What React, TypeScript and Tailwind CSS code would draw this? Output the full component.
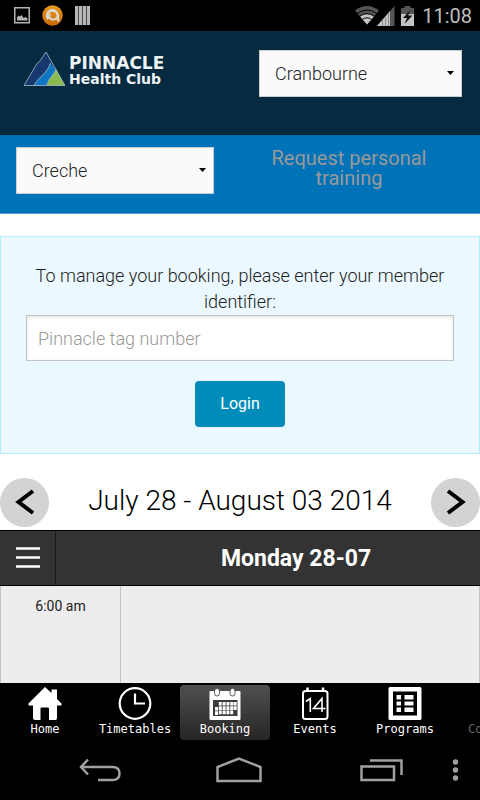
import type { ReactNode } from "react";

function StatusBar() {
  return (
    <div className="flex h-[31px] items-center bg-black pl-[14px] pr-2">
      <div className="flex flex-1 items-center gap-3">
        <svg width="16" height="17" viewBox="0 0 16 17" aria-hidden="true">
          <rect x="0.75" y="0.75" width="14.5" height="15" fill="none" stroke="#b4b4b4" strokeWidth="1.5" />
          <path d="M3 13.5V10.5L4.5 8.5L6 9.5L7.5 8L9.5 11L11.5 10L13.5 11.5V13.5Z" fill="#b4b4b4" />
        </svg>
        <svg width="21" height="21" viewBox="0 0 21 21" aria-hidden="true">
          <defs>
            <linearGradient id="coin" x1="0" y1="0" x2="0" y2="1">
              <stop offset="0" stopColor="#e79a1c" />
              <stop offset="1" stopColor="#c96a08" />
            </linearGradient>
          </defs>
          <circle cx="10.5" cy="10.5" r="10.2" fill="url(#coin)" />
          <path d="M6.2 14.2A5.4 5.4 0 1 1 15.8 10.4V13.8Q15.8 15.4 17.4 15.2" fill="none" stroke="#dcd8d2" strokeWidth="2.6" />
          <path d="M15 12.5A4.4 4.4 0 0 1 8 13.2A3 3 0 0 1 8.5 9" fill="none" stroke="#dcd8d2" strokeWidth="2" />
        </svg>
        <svg width="15" height="19" viewBox="0 0 15 19" aria-hidden="true">
          <path d="M0 0H15V19H0Z" fill="#b8b8b8" />
          <path d="M3 0H4V19H3ZM7 0H8V19H7ZM11 0H12V19H11Z" fill="#4a4a4a" />
        </svg>
      </div>
      <svg width="24" height="19" viewBox="0 0 24 19" aria-hidden="true">
        <path d="M12 18.5L0 4.6Q5.5 0 12 0T24 4.6Z" fill="#555" />
        <path d="M12 18.5L5 10.6Q8 8.2 12 8.2T19 10.6Z" fill="#c4c4c4" />
        <path d="M2.5 7.5Q7 4 12 4T21.5 7.5M4.7 10.3Q8 7.6 12 7.6T19.3 10.3M7.5 13.3Q9.6 11.8 12 11.8T16.5 13.3" fill="none" stroke="#000" strokeWidth="1" />
      </svg>
      <svg className="-ml-[2px]" width="18" height="20" viewBox="0 0 18 20" aria-hidden="true">
        <path d="M17.5 0V20H0Z" fill="#555" />
        <path d="M13 5V20H0Z" fill="#c4c4c4" />
        <path d="M5.5 14V20M8.500 10.500V20M11.500 7V20" stroke="#8c8c8c" strokeWidth="1" />
      </svg>
      <svg className="ml-[6px]" width="13" height="20" viewBox="0 0 13 20" aria-hidden="true">
        <path d="M3.5 0H9.5V2H13V8H0V2H3.5Z" fill="#555" />
        <path d="M0 8H13V20H0Z" fill="#c4c4c4" />
        <path d="M9.5 4L2 12H6L3.5 18L11.5 9.5H7.2Z" fill="#111" />
      </svg>
      <time className="ml-2 text-[20px] leading-6 text-[#bdbdbd]">11:08</time>
    </div>
  );
}

function Logo() {
  return (
    <div className="flex items-start gap-1 pt-[2px]">
      <svg width="41" height="34" viewBox="0 0 41 34" aria-hidden="true">
        <path d="M0 33.5L13 11.5L15.5 9.5L22 0L41 33.5Z" fill="#16386f" />
        <path d="M10 33.5C15 24 23 22 26.5 11L32 18C29 25 25 26 22.5 33.5Z" fill="#0e76c2" />
        <path d="M23 33.5C25 26 29 24 32 17.5L41 33.5Z" fill="#8abb4c" />
        <path d="M10 33.5C15 24 23 22 26.5 11M22.5 33.5C25 26 29 24 32 17.5M0 33.5L13 11.5L15.5 9.5L22 0L41 33.5Z" fill="none" stroke="#a8bccb" strokeWidth="0.8" />
      </svg>
      <div className="flex flex-col pt-[2px] font-['DejaVu_Sans',sans-serif] font-bold text-[#eef3f6]">
        <span className="text-[17px] leading-[18px]">PINNACLE</span>
        <span className="text-[14px] leading-[14px]">Health Club</span>
      </div>
    </div>
  );
}

function Picker({ label, options, className }: { label: string; options: string[]; className: string }) {
  return (
    <div className={`relative ${className}`}>
      <select
        aria-label={label}
        className="h-[47px] w-full appearance-none border border-[#ccc] bg-[#fafafa] pl-[15px] pr-8 text-[18px] font-light text-[#222]"
      >
        {options.map((o) => (
          <option key={o}>{o}</option>
        ))}
      </select>
      <svg className="pointer-events-none absolute right-2 top-[21px]" width="7" height="4" viewBox="0 0 7 4" aria-hidden="true">
        <path d="M0 0H7L3.5 4Z" fill="#000" />
      </svg>
    </div>
  );
}

function RoundButton({ label, path }: { label: string; path: string }) {
  return (
    <button aria-label={label} className="size-[49px] shrink-0 rounded-full bg-[#d3d3d3]">
      <svg width="49" height="49" viewBox="0 0 49 49" aria-hidden="true">
        <path d={path} fill="none" stroke="#000" strokeWidth="4" />
      </svg>
    </button>
  );
}

function Tab({ label, active, children }: { label: string; active?: boolean; children: ReactNode }) {
  return (
    <a
      href="#"
      aria-current={active ? "page" : undefined}
      className={`flex h-[55px] w-[90px] shrink-0 flex-col items-center rounded pt-[2px] font-['DejaVu_Sans_Mono',monospace] text-[12px] leading-4 text-white ${
        active ? "bg-linear-to-b from-[#505050] to-[#262626]" : ""
      }`}
    >
      <svg width="34" height="34" viewBox="0 0 34 34" aria-hidden="true">
        {children}
      </svg>
      {label}
    </a>
  );
}

export default function App() {
  return (
    <div className="flex min-h-screen flex-col overflow-hidden bg-white font-[Roboto,sans-serif] text-[#222]">
      <StatusBar />

      <header className="flex h-[104px] items-start justify-between border-b border-[#061d2b] bg-[#062a40] pl-6 pr-[18px] pt-[19px]">
        <Logo />
        <Picker label="Club" options={["Cranbourne"]} className="w-[203px]" />
      </header>

      <div className="flex h-[79px] items-start border-b border-[#5b9fd2] bg-[#0073b8] pl-4 pt-3">
        <Picker label="Service" options={["Creche"]} className="w-[198px]" />
        <a href="#" className="mx-auto w-[180px] pl-1 pt-px text-center text-[20px] leading-5 text-[#999]">
          Request personal training
        </a>
      </div>

      <form
        className="mt-[22px] flex flex-col items-center border border-[#b6edff] bg-[#ebf8ff] px-[25px] pb-[26px] pt-[26px]"
        onSubmit={(e) => e.preventDefault()}
      >
        <label htmlFor="member" className="text-center text-[18px] font-light leading-[26px]">
          To manage your booking, please enter your member identifier:
        </label>
        <input
          id="member"
          placeholder="Pinnacle tag number"
          className="h-[46px] w-full border border-[#c4c4c4] bg-white px-[11px] text-[18px] font-light shadow-[inset_0_1px_3px_rgba(0,0,0,0.12)] placeholder:text-[#999]"
        />
        <button className="mt-5 h-[46px] w-[90px] rounded bg-[#008cba] text-[16px] text-white">Login</button>
      </form>

      <div className="mt-6 flex items-center justify-between pb-[3px]">
        <RoundButton label="Previous week" path="M33 13L18.5 24L33 35" />
        <h1 className="pb-[3px] text-[28px] font-light leading-8 text-black">July 28 - August 03 2014</h1>
        <RoundButton label="Next week" path="M17 13L31.5 24L17 35" />
      </div>

      <div className="flex h-14 items-stretch border-y border-black bg-[#333] text-white">
        <button aria-label="Choose day" className="flex w-14 items-center justify-center border-r border-[#1a1a1a]">
          <svg width="24" height="24" viewBox="0 0 24 24" aria-hidden="true">
            <path d="M0 2.5H24M0 11.5H24M0 20.5H24" stroke="#fff" strokeWidth="2.5" />
          </svg>
        </button>
        <h2 className="flex-1 pl-14 text-center text-[23px] font-bold leading-[56px]">Monday 28-07</h2>
      </div>

      <div className="flex min-h-24 flex-1 border-x border-[#c4c4c4] bg-[#ededed]">
        <div className="w-[120px] border-r border-[#c4c4c4] pt-[10px] text-center text-[14px] leading-5">6:00 am</div>
        <div className="flex-1" />
      </div>

      <nav className="flex h-[59px] items-start overflow-hidden bg-black pt-[2px]">
        <Tab label="Home">
          <path d="M17 0L0.5 16.5V18.5H5V31Q5 33 7 33H12.500V21.5Q12.500 20.500 13.500 20.500H20Q21 20.500 21 21.500V33H27.500Q29 33 29 31V18.500H33.500V16.500L29 12V2.500H23.500V6Z" fill="#fff" />
        </Tab>
        <Tab label="Timetables">
          <circle cx="17" cy="16.500" r="15.300" fill="none" stroke="#fff" strokeWidth="2.200" />
          <path d="M17 6.500V16.500H27" fill="none" stroke="#fff" strokeWidth="2.200" />
        </Tab>
        <Tab label="Booking" active>
          <rect x="1.500" y="4" width="31" height="29" rx="1" fill="#fff" />
          <rect x="6.500" y="1.500" width="5" height="7.500" rx="2.500" fill="#fff" stroke="#555" />
          <rect x="22" y="1.500" width="5" height="7.500" rx="2.500" fill="#fff" stroke="#555" />
          <rect x="5" y="13" width="24.500" height="16" fill="#3c3c3c" />
          <path d="M8.500 20V28M12.300 15V28M16.100 15V28M19.900 15V28M23.700 15V28M27.200 15V23" stroke="#fff" strokeWidth="3" strokeDasharray="3.600 0.700" />
        </Tab>
        <Tab label="Events">
          <rect x="5" y="4" width="24.500" height="28" rx="2.500" fill="none" stroke="#fff" strokeWidth="2" />
          <path d="M9.500 0.500V5M25 0.500V5" stroke="#fff" strokeWidth="2.500" />
          <path d="M8 14.500L12.300 11.500V25M24 25V11.500L15.500 21.500H27.500" fill="none" stroke="#fff" strokeWidth="1.600" />
        </Tab>
        <Tab label="Programs">
          <rect x="0.500" y="0" width="33" height="33" rx="1.500" fill="#fff" />
          <rect x="5" y="4.500" width="24" height="24" fill="#000" />
          <path d="M8.500 8H13V12.500H8.500ZM16.500 8H25.500V12.500H16.500ZM8.500 14.500H13V18.500H8.500ZM16.500 14.500H25.500V18.500H16.500ZM8.500 20.500H13V25H8.500ZM16.500 20.500H25.500V25H16.500Z" fill="#fff" />
        </Tab>
        <a href="#" className="ml-[18px] shrink-0 pt-9 font-['DejaVu_Sans_Mono',monospace] text-[12px] leading-4 text-[#666]">
          Contact
        </a>
      </nav>

      <div className="flex h-[58px] items-center bg-black pb-[2px] pl-[79px] pr-[19px]">
        <div className="flex flex-1 items-center justify-between">
          <button aria-label="Back">
            <svg width="42" height="24" viewBox="0 0 42 24" fill="none" stroke="#a0a0a0" strokeWidth="2.500" aria-hidden="true">
              <path d="M9 1.500L2 9L9 16.500M2 9H33.500Q40.500 9 40.500 15.500T33.500 22H19" />
            </svg>
          </button>
          <button aria-label="Home screen" className="-ml-1">
            <svg width="46" height="26" viewBox="0 0 46 26" fill="none" stroke="#a0a0a0" strokeWidth="2.500" aria-hidden="true">
              <path d="M1.500 24V10L23 1.500L44.500 10V24Z" />
            </svg>
          </button>
          <button aria-label="Recent apps">
            <svg width="43" height="24" viewBox="0 0 43 24" fill="none" stroke="#a0a0a0" strokeWidth="2.500" aria-hidden="true">
              <path d="M1.500 8.500H34V22H1.500ZM10 2.500H41.500V17" />
            </svg>
          </button>
        </div>
        <button aria-label="More options" className="ml-[47px]">
          <svg width="11" height="22" viewBox="0 0 11 22" fill="#a0a0a0" aria-hidden="true">
            <circle cx="5.500" cy="3" r="2.700" />
            <circle cx="5.500" cy="11" r="2.700" />
            <circle cx="5.500" cy="19" r="2.700" />
          </svg>
        </button>
      </div>
    </div>
  );
}
